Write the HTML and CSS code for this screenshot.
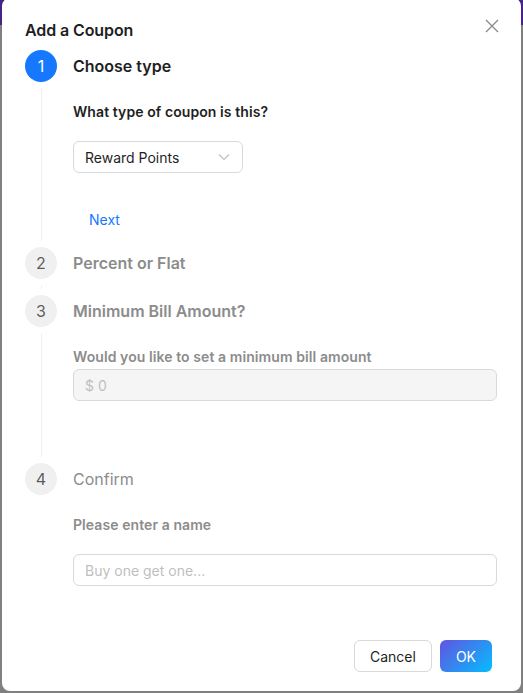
FILE: index.html
```
<!DOCTYPE html>
<html lang="en">
<head>
<meta charset="utf-8">
<title>Add a Coupon</title>
<link rel="stylesheet" href="styles.css">
</head>
<body>
<div class="modal">
  <button class="close" aria-label="Close">
    <svg width="14" height="14" viewBox="0 0 14 14"><path d="M1 1 L13 13 M13 1 L1 13" stroke="#8c8c8c" stroke-width="1.4" fill="none"/></svg>
  </button>
  <div class="modal-title">Add a Coupon</div>

  <div class="steps">
    <div class="step">
      <div class="rail"><div class="dot dot-active">1</div><div class="tail"></div></div>
      <div class="content content-1">
        <div class="step-title title-active">Choose type</div>
        <div class="label label-dark">What type of coupon is this?</div>
        <div class="select">
          <span>Reward Points</span>
          <svg width="12" height="8" viewBox="0 0 12 8"><path d="M1 1.5 L6 6.5 L11 1.5" stroke="#bfbfbf" stroke-width="1.2" fill="none"/></svg>
        </div>
        <button class="link-btn">Next</button>
      </div>
    </div>

    <div class="step">
      <div class="rail"><div class="dot">2</div><div class="tail"></div></div>
      <div class="content">
        <div class="step-title title-wait">Percent or Flat</div>
      </div>
    </div>

    <div class="step">
      <div class="rail"><div class="dot">3</div><div class="tail"></div></div>
      <div class="content content-3">
        <div class="step-title title-wait">Minimum Bill Amount?</div>
        <div class="label label-gray">Would you like to set a minimum bill amount</div>
        <div class="input input-disabled">$ 0</div>
      </div>
    </div>

    <div class="step">
      <div class="rail"><div class="dot">4</div></div>
      <div class="content">
        <div class="step-title title-plain">Confirm</div>
        <div class="label label-gray">Please enter a name</div>
        <div class="input input-name">Buy one get one...</div>
      </div>
    </div>
  </div>

  <div class="footer">
    <button class="btn btn-default">Cancel</button>
    <button class="btn btn-primary">OK</button>
  </div>
</div>
</body>
</html>
```
FILE: styles.css
```
* { box-sizing: border-box; }
html, body { margin: 0; padding: 0; }
body {
  width: 523px;
  height: 693px;
  overflow: hidden;
  background: linear-gradient(#45248a, #45248a) top / 100% 25px no-repeat, #808080;
  font-family: Inter, "Noto Sans", "Liberation Sans", sans-serif;
  color: rgba(0,0,0,0.88);
}
.modal {
  position: relative;
  margin: -2px 0 0 2px;
  width: 519px;
  height: 693px;
  background: #fff;
  border-radius: 8px;
  padding: 20px 24px 19px 23px;
  display: flex;
  flex-direction: column;
}
.close {
  position: absolute;
  top: 17px;
  right: 18px;
  width: 22px;
  height: 22px;
  border: 0;
  background: transparent;
  padding: 0;
  display: flex;
  align-items: center;
  justify-content: center;
}
.modal-title {
  font-size: 16px;
  line-height: 24px;
  font-weight: 600;
  color: #1f1f1f;
  letter-spacing: -0.1px;
}
.steps { margin-top: 8px; display: flex; flex-direction: column; }
.step { display: flex; }
.rail {
  width: 32px;
  display: flex;
  flex-direction: column;
  align-items: center;
}
.dot {
  width: 32px;
  height: 32px;
  border-radius: 50%;
  background: #f0f0f0;
  color: rgba(0,0,0,0.65);
  font-size: 16px;
  line-height: 32px;
  text-align: center;
  flex: none;
}
.dot-active { background: #1677ff; color: #fff; }
.tail {
  flex: 1;
  width: 1px;
  background: #f0f0f0;
  margin: 6px 0;
}
.content {
  margin-left: 16px;
  flex: 1;
  min-height: 48px;
  display: flex;
  flex-direction: column;
  align-items: flex-start;
}
.content-1 { padding-bottom: 12px; }
.content-3 { padding-bottom: 62px; }
.step-title {
  font-size: 16px;
  line-height: 32px;
}
.title-active { font-weight: 600; color: #1f1f1f; }
.title-wait { font-weight: 600; color: #8c8c8c; }
.title-plain { font-weight: 400; color: #8c8c8c; }
.label {
  margin-top: 19px;
  font-size: 14px;
  line-height: 22px;
  font-weight: 600;
  letter-spacing: 0.08px;
}
.label-dark { color: #1f1f1f; }
.label-gray { color: #8c8c8c; }
.select {
  margin-top: 18px;
  width: 170px;
  height: 32px;
  border: 1px solid #d9d9d9;
  border-radius: 6px;
  padding: 0 12px 0 11px;
  display: flex;
  align-items: center;
  justify-content: space-between;
  font-size: 14px;
  color: #1f1f1f;
}
.link-btn {
  margin-top: 30px;
  height: 32px;
  padding: 0 15px;
  border: 1px solid transparent;
  background: transparent;
  color: #1677ff;
  font-family: inherit;
  font-size: 14px;
}
.input {
  width: 424px;
  height: 32px;
  border: 1px solid #d9d9d9;
  border-radius: 6px;
  padding: 0 11px;
  display: flex;
  align-items: center;
  font-size: 14px;
  color: #bfbfbf;
}
.input-disabled { margin-top: 1px; background: #f5f5f5; }
.input-name { margin-top: 18px; }
.footer {
  margin-top: auto;
  display: flex;
  justify-content: flex-end;
  gap: 8px;
  padding-right: 5px;
}
.btn {
  height: 32px;
  padding: 0 15px;
  border-radius: 6px;
  font-family: inherit;
  font-size: 14px;
}
.btn-default { background: #fff; border: 1px solid #d9d9d9; color: #1f1f1f; }
.btn-primary {
  border: 0;
  padding: 0 16px;
  color: #fff;
  background: linear-gradient(135deg, #6253e1, #04befe);
}
```
